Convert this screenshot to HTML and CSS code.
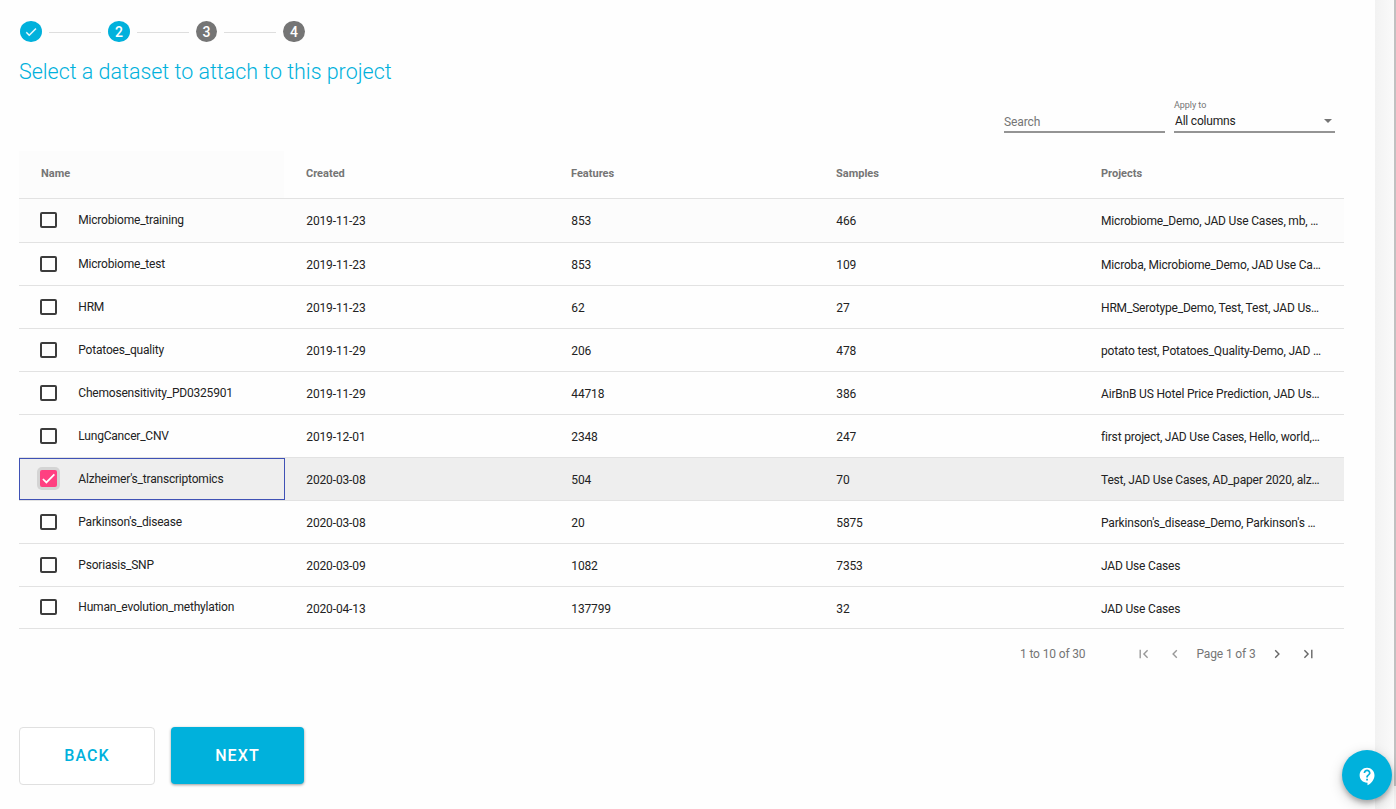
FILE: index.html
```html
<!DOCTYPE html>
<html lang="en">
<head>
<meta charset="utf-8">
<title>Select a dataset</title>
<link rel="stylesheet" href="styles.css">
</head>
<body>
<main class="page">
  <div class="stepper">
    <span class="step done"><svg viewBox="0 0 24 24" width="14" height="14"><path fill="#fff" stroke="#fff" stroke-width=".6" d="M9 16.17 4.83 12l-1.42 1.41L9 19 21 7l-1.41-1.41z"/></svg></span>
    <i class="line"></i><span class="step active">2</span>
    <i class="line"></i><span class="step">3</span>
    <i class="line"></i><span class="step">4</span>
  </div>
  <h1 class="title">Select a dataset to attach to this project</h1>
  <div class="filters">
    <div class="field search"><span>Search</span></div>
    <div class="field select"><small>Apply to</small><div class="value"><span>All columns</span><i class="arrow"></i></div></div>
  </div>
  <div class="table" id="table">
    <div class="row head"><div class="cell first">Name</div><div class="cell">Created</div><div class="cell">Features</div><div class="cell">Samples</div><div class="cell">Projects</div></div>
  </div>
  <div class="pager">
    <span class="range">1 to 10 of 30</span>
    <svg class="off first-page" viewBox="0 0 10 10" width="10" height="10"><path d="M1.2 0.8v8.4M8.6 1.3 4.9 5l3.7 3.7"/></svg>
    <svg class="off prev" viewBox="0 0 10 10" width="10" height="10"><path d="M6.8 1.3 3.1 5l3.7 3.7"/></svg>
    <span class="current">Page 1 of 3</span>
    <svg class="next-page" viewBox="0 0 10 10" width="10" height="10"><path d="M3.2 1.3 6.9 5 3.2 8.7"/></svg>
    <svg class="last-page" viewBox="0 0 10 10" width="10" height="10"><path d="M1.4 1.3 5.1 5 1.4 8.7M8.8 0.8v8.4"/></svg>
  </div>
  <div class="actions"><button class="btn back">BACK</button><button class="btn next">NEXT</button></div>
</main>
<aside class="gutter"></aside>
<div class="scrollbar"><div class="thumb"></div></div>
<button class="help"><svg viewBox="0 0 24 24" width="21" height="21"><path fill="#fff" d="M11.5 2C6.81 2 3 5.81 3 10.5S6.81 19 11.5 19h.5v3c4.86-2.34 8-7 8-11.5C20 5.81 16.19 2 11.5 2zm1 14.500h-2v-2h2v2zm0-3.500h-2c0-3.250 3-3 3-5 0-1.100-.9-2-2-2s-2 .9-2 2h-2c0-2.210 1.790-4 4-4s4 1.790 4 4c0 2.500-3 2.750-3 5z"/></svg></button>
<script src="table.js"></script>
</body>
</html>
```
FILE: styles.css
```css
* { box-sizing: border-box; }
body { margin: 0; width: 1396px; height: 809px; overflow: hidden; display: flex; background: #fefefe; font-family: Roboto, sans-serif; font-size: 12px; color: #222; }
.page { width: 1375px; flex: none; padding: 21px 0 0 19px; background: #fefefe; }
.gutter { width: 19px; flex: none; background: linear-gradient(90deg, #f2f2f2, #fafafa); }
.scrollbar { width: 2px; flex: none; background: #f1f1f1; }
.thumb { height: 786px; background: #c1c1c1; }
.stepper { display: flex; align-items: center; height: 21px; padding-left: 1px; }
.step { width: 21.500px; height: 21.500px; border-radius: 50%; background: #757575; color: #fff; display: flex; align-items: center; justify-content: center; font-size: 14px; font-weight: 500; line-height: 22px; padding-top: 1px; }
.step.done, .step.active { background: #00b1dc; width: 22px; }
.step.done { padding: 0; }
.line { width: 52px; height: 1px; background: #dedede; margin: 1px 7px 0 6.900px; }
.title { margin: 16px 0 0; height: 28px; line-height: 28px; font-size: 21.450px; font-weight: 300; color: #00b1dc; white-space: nowrap; }
.filters { display: flex; justify-content: flex-end; gap: 9px; padding-right: 40px; margin-top: 13px; height: 34px; }
.field { width: 161px; height: 34px; border-bottom: 2px solid #949494; color: #757575; }
.search { padding-top: 15px; line-height: 16px; }
.search span { letter-spacing: -.1px; }
.select small { display: block; font-size: 9px; line-height: 10px; padding-top: 1px; letter-spacing: -.05px; }
.value { display: flex; justify-content: space-between; align-items: center; color: #222; line-height: 16px; padding: 3px 3px 0 1px; letter-spacing: -.2px; }
.arrow { border: 4px solid transparent; border-top-color: #757575; border-bottom: 0; }
.table { width: 1325px; margin-top: 18px; }
.row { display: grid; grid-template-columns: repeat(5, 265px); height: 43px; border-bottom: 1px solid #e2e2e2; }
.cell { padding: 1px 22px 0; display: flex; align-items: center; min-width: 0; white-space: nowrap; letter-spacing: -.18px; }
.cell.number { letter-spacing: -.14px; padding-left: 22.300px; }
.row:nth-child(2) { height: 44px; background: #fcfcfc; }
.row:last-child { height: 42px; }
.row:last-child .cell:not(.name) { padding-top: 2px; }
.head { height: 48px; font-size: 11px; font-weight: 700; color: #757575; }
.head .cell { padding-top: 0; padding-bottom: 2px; letter-spacing: 0; }
.head .first { background: #fcfcfc; }
.cell.name { padding: 0 20px 0 21px; gap: 21.300px; letter-spacing: -.2px; }
.row:nth-child(2) .name, .row:last-child .name { padding-bottom: 1px; }
.check { width: 17px; height: 16px; border: 2px solid #3c3c3c; border-radius: 2px; flex: none; display: flex; }
.selected { background: #eee; }
.selected .cell.name { border: 1px solid #3f51b5; padding-left: 20px; margin-right: -1px; }
.selected .check { height: 17px; background: #ff4081; border: 0; box-shadow: 0 0 0 3px #d4d4d4; align-items: center; justify-content: center; margin-bottom: 1px; }
.pager { height: 50px; display: flex; align-items: center; padding-left: 1001px; color: #757575; letter-spacing: -.14px; }
.pager svg { fill: none; stroke: #666; stroke-width: 1.400; }
.pager .off { stroke: #999; }
.range { width: 118.500px; }
.prev { margin-left: 21px; }
.current { width: 61px; margin-left: 17px; }
.next-page { margin-left: 14px; }
.last-page { margin-left: 21px; }
.actions { display: flex; gap: 16px; margin-top: 48px; align-items: flex-start; }
.btn { font: 500 16px/20px Roboto, sans-serif; letter-spacing: 1.100px; padding: 0; border-radius: 4px; }
.back { width: 136px; height: 58px; border: 1px solid #e0e0e0; background: #fff; color: #00b1dc; }
.next { width: 133px; height: 57px; border: 0; background: #00b1dc; color: #fff; box-shadow: 0 1px 3px rgba(0,0,0,.4); }
.help { position: absolute; left: 1342px; top: 750px; width: 50px; height: 50px; border: 0; border-radius: 50%; background: #00b1dc; box-shadow: 0 3px 5px rgba(0,0,0,.25), 0 4px 14px rgba(0,0,0,.18); display: flex; align-items: center; justify-content: center; padding: 2px 0 0; }
```
FILE: table.js
```js
const rows = [
  ["Microbiome_training", "2019-11-23", "853", "466", "Microbiome_Demo, JAD Use Cases, mb, …"],
  ["Microbiome_test", "2019-11-23", "853", "109", "Microba, Microbiome_Demo, JAD Use Ca…"],
  ["HRM", "2019-11-23", "62", "27", "HRM_Serotype_Demo, Test, Test, JAD Us…"],
  ["Potatoes_quality", "2019-11-29", "206", "478", "potato test, Potatoes_Quality-Demo, JAD …"],
  ["Chemosensitivity_PD0325901", "2019-11-29", "44718", "386", "AirBnB US Hotel Price Prediction, JAD Us…"],
  ["LungCancer_CNV", "2019-12-01", "2348", "247", "first project, JAD Use Cases, Hello, world,…"],
  ["Alzheimer's_transcriptomics", "2020-03-08", "504", "70", "Test, JAD Use Cases, AD_paper 2020, alz…"],
  ["Parkinson's_disease", "2020-03-08", "20", "5875", "Parkinson's_disease_Demo, Parkinson's …"],
  ["Psoriasis_SNP", "2020-03-09", "1082", "7353", "JAD Use Cases"],
  ["Human_evolution_methylation", "2020-04-13", "137799", "32", "JAD Use Cases"]
];
const selected = 6;
const tick = '<svg viewBox="0 0 24 24" width="17" height="17"><path fill="none" stroke="#fff" stroke-width="2.4" d="M4.100 12.700 9 17.600 20.300 6.300"/></svg>';
document.getElementById("table").insertAdjacentHTML("beforeend", rows.map((r, i) =>
  `<div class="row${i === selected ? " selected" : ""}"><div class="cell name"><span class="check">${i === selected ? tick : ""}</span><span>${r[0]}</span></div>` +
  r.slice(1).map((t, c) => `<div class="cell${c < 3 ? " number" : ""}"><span>${t}</span></div>`).join("") + "</div>").join(""));
```
